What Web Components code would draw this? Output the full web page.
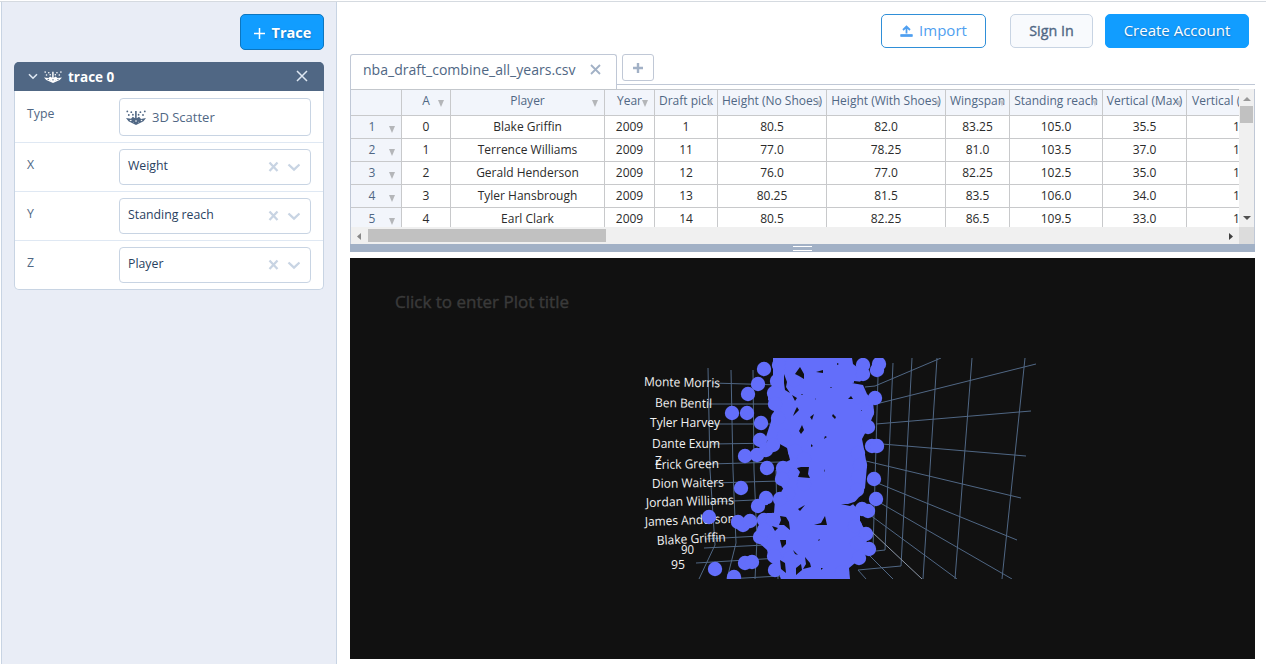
<!DOCTYPE html>
<html lang="en"><head><meta charset="utf-8"><title>Chart editor</title>
<style>
html,body{margin:0;height:100%;overflow:hidden;background:#fff}
body{font-family:"Open Sans","Noto Sans",sans-serif;font-size:12px;color:#506784}
</style></head><body><chart-app></chart-app>
<script>
const define=(name,html,setup)=>customElements.define(name,class extends HTMLElement{
  constructor(){super();const t=document.createElement('template');t.innerHTML=html;
    this.attachShadow({mode:'open'}).append(t.content.cloneNode(true));}
  connectedCallback(){if(setup)setup.call(this,this.shadowRoot);}
});

define('scatter-icon',`<style>:host{display:block;flex:none;width:20px;height:15px}svg{display:block;width:100%;height:100%}</style>
<svg viewBox="0 0 20 14" preserveAspectRatio="none" fill="currentColor"><path d="M0 7.500 5 8.200 6.800 6.300 9.100 7.800V1h1.600v6.800L13 6.300l2 2 5-.8-2.500 3L10 14 2.500 10.500Z"/><g fill="var(--icon-bg,#fff)"><path d="m3.500 9.500 1.600-.4.700.8-1 .5zM14.500 9.500l1.400-.4.600.5-1.200.8zM9.100 10.300l.9-.9.900.9-.9 1zM6.900 11l.7.400-.4.400zM12.600 11l.6.400-.8.400z"/></g><circle cx="1.300" cy="1.300" r=".9"/><circle cx="5.300" cy="2" r=".9"/><circle cx="2.800" cy="4.600" r=".9"/><circle cx="6.900" cy="4.400" r=".9"/><circle cx="12.600" cy="4.400" r=".9"/><circle cx="14.400" cy="2" r=".9"/><circle cx="17" cy="4.600" r=".9"/><circle cx="18.800" cy="1.300" r=".9"/></svg>`);

define('ui-button',`<style>:host{display:flex;box-sizing:border-box;align-items:center;justify-content:center;border:1px solid #119dff;border-radius:5px;background:#119dff;color:#fff;font-size:15px;font-weight:500;white-space:nowrap;line-height:20px}
:host([kind=outline]){background:#fff;color:#4f9ff0;border-color:#2f8fd8;font-weight:400;padding-bottom:2px}
:host(:not([kind])){padding-bottom:2px}
:host([kind=plain]){background:#f8fafd;color:#506784;border-color:#c8d4e3;font-size:14.3px;-webkit-text-stroke:.35px #506784}
:host([kind=add]){border-color:#0d76bf;font-weight:700;font-size:14.5px;padding-top:2px}
:host(:not([kind=outline]):not([kind=plain])){text-shadow:0 1px 2px rgba(30,70,120,.6)}</style><slot></slot>`);

define('select-field',`<style>:host{display:flex;height:48px;border-bottom:1px solid #dfe8f3;padding:0 12px;align-items:flex-start}
:host([tall]){height:51px}:host([last]){border:0}
label{width:92px;padding-top:13px;line-height:18px;font-size:12.3px}
:host([tall]) label{padding-top:14px}
div{box-sizing:border-box;width:192px;height:36px;margin-top:6px;border:1px solid #c8d4e3;border-radius:4px;display:flex;align-items:center;padding:0 10px 0 8px;color:#2a3f5f;font-size:12.3px;line-height:18px}
:host([tall]) div{height:38px;margin-top:7px;color:#506784;padding-left:6px;font-size:13px}
span{flex:1;padding-bottom:2px}:host([tall]) span{padding:0 0 0 6px}
svg{width:34px;height:14px}:host([tall]) svg{display:none}</style>
<label></label><div><slot name="icon"></slot><span><slot></slot></span><svg viewBox="0 0 34 14" fill="none" stroke="#c8d4e3" stroke-width="2.300"><path d="m3.500 2.500 8 8.500m0-8.500-8 8.500M22.500 4.500l5.500 5.200 5.500-5.200"/></svg></div>`,
function(r){r.querySelector('label').textContent=this.getAttribute('label')});

define('trace-panel',`<style>:host{display:flex;flex-direction:column;box-sizing:border-box;width:310px;height:228px;border-radius:5px;background:#fff;border:1px solid #c8d4e3;border-top:0;background:linear-gradient(#506784,#506784) 0 0/100% 29px no-repeat border-box #fff}
header{height:29px;margin:0 -1px;border-radius:5px 5px 0 0;background:#506784;color:#fff;display:flex;align-items:center;padding:0 16px 0 14px;font-weight:700;font-size:13.500px;flex:none}
header scatter-icon{--icon-bg:#506784;margin:0 6px 0 6px;width:18px;height:12px}
.name{flex:1}svg{display:block}</style>
<header><svg width="10" height="7" fill="none" stroke="#dfe8f3" stroke-width="1.600"><path d="m1 1.200 4 4 4-4"/></svg><scatter-icon></scatter-icon><span class="name">trace 0</span><svg width="12" height="12" stroke="#dfe8f3" stroke-width="1.500" style="margin-bottom:2px"><path d="m1 1 10 10m0-10L1 11"/></svg></header>
<select-field tall label="Type"><scatter-icon slot="icon"></scatter-icon>3D Scatter</select-field>
<select-field label="X">Weight</select-field><select-field label="Y">Standing reach</select-field><select-field last label="Z">Player</select-field>`);

define('side-bar',`<style>:host{display:flex;flex-direction:column;box-sizing:border-box;width:336px;margin-left:1px;border:1px solid #c8d4e3;border-width:0 1px;background:#e9edf6;padding:12px 0 0 12px}
ui-button{width:84px;height:36px;margin:0 0 12px 226px;gap:6px}</style>
<ui-button kind="add"><svg width="13" height="13" stroke="#fff" stroke-width="1.500"><path d="M6.500 1v11M1 6.500h11"/></svg><span>Trace</span></ui-button><trace-panel></trace-panel>`);

define('data-grid',`<style>:host{display:grid;grid-template:138px 17px / 888px 15px;box-sizing:border-box;width:905px;border:1px solid #c0c8d6;border-width:0 1px}
.cells{display:grid;grid-template-columns:51px 49px 154px 50px 63px 109px 119px 64px 93px 84px 120px;grid-template-rows:26px repeat(5,23px);width:956px}
.view{overflow:hidden;border-top:1px solid #c3c7cc;height:137px}
.c{box-sizing:border-box;border-right:1px solid #c8c9cb;border-bottom:1px solid #c8c9cb;text-align:center;line-height:22px;font-size:12px;color:#2b2b2b;position:relative;white-space:nowrap;overflow:hidden}
.c:nth-child(11n+1),.h{background:#f2f5fb;color:#506784}.c:nth-child(11n+1){padding-right:8px}
.c:nth-child(11n){text-align:left;padding-left:46px}.c.h:nth-child(11){padding-left:5px}
.h i,.c:nth-child(11n+1) i{position:absolute;right:6px;top:10px;border:3px solid transparent;border-top:7px solid #b4b6b9;border-bottom:0}
.h:first-child i,.h:nth-child(11) i{display:none}.h:nth-child(n+5) i{right:4px;opacity:.75;transform:scale(.85)}
.v,.hz{background:#f0f0f0;display:flex}.v{flex-direction:column;align-items:center}.hz{align-items:center}
.corner{background:#dcdcdc}.thumb{background:#c1c1c1}svg{display:block;flex:none}</style>
<div class="view"><div class="cells"></div></div>
<div class="v"><svg width="15" height="17"><path d="M4 12h8L8 8z" fill="#999"/></svg><div class="thumb" style="width:13px;height:17px"></div><span style="flex:1"></span><svg width="15" height="17"><path d="M4 6h8l-4 4z" fill="#505050"/></svg></div>
<div class="hz"><svg width="17" height="16"><path d="M10 5v7L6 8.500z" fill="#888"/></svg><div class="thumb" style="height:13px;width:238px"></div><span style="flex:1"></span><svg width="17" height="16"><path d="M7 5v7l4-3.500z" fill="#404040"/></svg></div><div class="corner"></div>`,
function(r){const rows=[['','A','Player','Year','Draft pick','Height (No Shoes)','Height (With Shoes)','Wingspan','Standing reach','Vertical (Max)','Vertical ('],
['1','0','Blake Griffin','2009','1','80.5','82.0','83.25','105.0','35.5','1'],['2','1','Terrence Williams','2009','11','77.0','78.25','81.0','103.5','37.0','1'],['3','2','Gerald Henderson','2009','12','76.0','77.0','82.25','102.5','35.0','1'],['4','3','Tyler Hansbrough','2009','13','80.25','81.5','83.5','106.0','34.0','1'],['5','4','Earl Clark','2009','14','80.5','82.25','86.5','109.5','33.0','1']];
r.querySelector('.cells').innerHTML=rows.map((row,i)=>row.map((x,j)=>`<div class="c${i?'':' h'}">${x}${!i||!j?'<i></i>':''}</div>`).join('')).join('')});

define('sheet-tabs',`<style>:host{display:flex;height:31px;width:905px}
.tab{box-sizing:border-box;width:267px;height:35px;border:1px solid #c0c8d6;border-bottom:0;border-radius:3px 3px 0 0;display:flex;align-items:center;padding:0 15px 6px 12px;justify-content:space-between;font-size:14.050px;background:#fff}
.rest{flex:1;box-sizing:border-box;border-bottom:1px solid #c0c8d6;padding-left:5px;height:31px}
.add{box-sizing:border-box;width:32px;height:27px;border:1px solid #c0c8d6;border-radius:3px;display:flex;align-items:center;justify-content:center}</style>
<div class="tab"><span>nba_draft_combine_all_years.csv</span><svg width="11" height="11" stroke="#a2b1c6" stroke-width="1.800"><path d="m1 1 9 9m0-9-9 9"/></svg></div><div class="rest"><div class="add"><svg width="12" height="12" stroke="#a2b1c6" stroke-width="2.400"><path d="M6 1v10M1 6h10"/></svg></div></div>`);

define('scatter-plot',`<style>:host{display:block;width:905px;height:401px;background:#111}svg{display:block}text{font-family:"Open Sans",sans-serif}</style>
<svg width="905" height="401" viewBox="350 258 905 401"><text x="395" y="308" font-size="16.500" textLength="174" lengthAdjust="spacingAndGlyphs" fill="#3a3a3a" stroke="#3a3a3a" stroke-width=".4">Click to enter Plot title</text>
<clipPath id="scene"><path d="M630 358h420v221H630z"/></clipPath><g clip-path="url(#scene)">
<path fill="none" stroke="#506784" stroke-width="1" d="M893 363 885 550 876 551M912 358 901 566 858 570M937 358 923 579M972 358 955 579M1025 358 1002 579M878 377 873 550M865 387 875 386 941 358M876 404 1036 364M876 424 1031 411M870 443 1026 456M866 461 1021 498M870 480 1017 540M870 497 1012 579M870 515 957 579M870 556 893 579M858 570 866 579M708 368 710 470 715 545 699 579M731 370 733 470 736 543 727 579M753 370 754 470 757 540 755 579M776 470 778 579M712 383 780 385M709 404H770M712 424H770M712 444 780 443M710 464 780 462M712 483 780 481M712 502 775 499M730 520 770 517M705 539 760 536M704 548 765 545M696 563 780 558M727 579 780 576"/><path d="M872 532 922 579" stroke="#8d98a8"/>
<g id="labels" fill="#f2f2f2" font-size="12.500"></g>
<g fill="#636efa"><path d="M773 358H852L853 364 866 374 860 382 852 383 863 385 867 394 873 400 874 413 869 426 862 439 864 449 867 466 865 488 860 496 853 504 860 512 860 521 866 532 867 546 860 559 849 568 850 579H780L790 575 796 575 797 566 785 575 780 567 770 562 767 550 758 542 760 522 767 513 774 513 775 500 784 490 776 478 777 466 790 460 787 448 778 443 765 440 773 415 775 407 768 400 768 391 773 385 773 375Z"/><g id="dots"></g></g>
<path id="gaps" fill="#111" d="M800 367l4 7 0 5-5-3-4-2zM816 372l7-2v3zM784 374l3 8-1 5 4 6-5-3-1-7zM792 395l5 3-2 3zM797 407l2 3-6 6 2-5zM814 414l-2 6-2-3zM833 414l3 3-1 2-3-3zM848 399l3-3 2 3zM802 425l2 5-3 4-2-3zM825 436l2 1-3 2zM811 444l2 2-2 1zM797 468l4-1 8 0-1 7 2 4-12-1 2-5zM798 509l7-4-5 6zM841 504l7 0 12-4-10 6zM814 525l7-2 4-7 2 9-13 0zM780 516l6 1 3 5 1 8-6-5-5 0 2-5zM768 504l5-1 1 8-6-1zM772 526l6 2-3 3zM780 540l6 0 0 4-4 4zM793 550l5 5-3-1zM805 557l5 6 1 4-8 2 3-5zM780 560l5 3 1 10-5-4zM796 568l5-4 1 6-6 5zM837 363l2 1-2 1zM831 387l1 1-2 0zM802 394l1 1-2 0zM815 398l1 2-1-1zM861 410l1 1-1 0zM819 539l1 1-2 1zM821 568l2 0-2 2zM824 469l1 3-1-1zM854 381l9 1 0 2-9-1z"/>
</g></svg>`,
function(r){
const labels=[['Monte Morris',644,386,76,1],['Ben Bentil',655,407,57,1],['Tyler Harvey',650,427,70,0],['Dante Exum',652,448,68,0],['Z',655,465,7,0],['Erick Green',655,469,64,-1],['Dion Waiters',652,488,72,-1],['Jordan Williams',646,507,88,-1.8],['James Anderson',645,526,90,-2],['Blake Griffin',657,545,69,-3],['90',681,554,13,0],['95',671,569,14,0]];
r.getElementById('labels').innerHTML=labels.map(([t,x,y,w,a])=>`<text x="${x}" y="${y}" textLength="${w}" lengthAdjust="spacingAndGlyphs" transform="rotate(${a} ${x} ${y})">${t}</text>`).join('');
const dots=[[764,369],[758,384],[748,394],[747,413],[732,413],[761,423],[745,456],[757,455],[767,468],[741,488],[709,517],[738,522],[743,525],[750,521],[766,498],[758,506],[760,537],[745,563],[752,562],[715,569],[734,577],[760,440],[766,450],[773,445],[779,365],[777,381],[774,393],[794,380],[792,365],[775,404],[778,418],[784,436],[795,451],[783,468],[782,479],[788,494],[780,499],[804,459],[804,484],[764,520],[773,520],[764,530],[782,532],[774,544],[774,556],[775,570],[790,558],[795,570],[787,575],[863,365],[879,364],[863,374],[877,370],[875,398],[867,412],[868,427],[872,446],[877,446],[874,479],[876,499],[862,509],[868,511],[855,526],[866,534],[869,549],[859,558],[842,572],[857,543],[857,397],[858,453],[860,465],[858,477],[857,490]];
r.getElementById('dots').innerHTML=dots.map(([x,y])=>`<circle cx="${x}" cy="${y}" r="7.200"/>`).join('')});

define('chart-app',`<style>:host{display:flex;box-sizing:border-box;width:1266px;height:664px;padding-top:1px;background:linear-gradient(#d5dae0,#d5dae0) 0 1px/100% 1px no-repeat #fff}
side-bar{height:662px;margin-top:1px}
main{width:905px;margin-left:13px;display:flex;flex-direction:column}
nav{height:53px;box-sizing:border-box;padding:13px 6px 6px 0;display:flex;justify-content:flex-end}
nav ui-button{height:34px}
.split{height:8px;background:#a2b1c6;display:flex;align-items:center;justify-content:center;margin-bottom:6px}.split i{box-sizing:border-box;width:19px;height:5px;border:solid #fff;border-width:1px 0}</style>
<side-bar></side-bar><main><nav><ui-button kind="outline" style="width:105px;gap:6px"><svg width="13" height="13" fill="none" stroke="currentColor" stroke-width="1.800"><path d="M6.500 9.500V3M3 6l3.500-3.500L10 6M.5 11.500h12" /><path d="M.5 11.500h12" stroke-width="2.500"/></svg><span>Import</span></ui-button><ui-button kind="plain" style="width:83px;margin:0 12px 0 24px">Sign In</ui-button><ui-button style="width:144px">Create Account</ui-button></nav>
<sheet-tabs></sheet-tabs><data-grid style="margin-top:4px"></data-grid><div class="split"><i></i></div><scatter-plot></scatter-plot></main>`);
</script></body></html>
